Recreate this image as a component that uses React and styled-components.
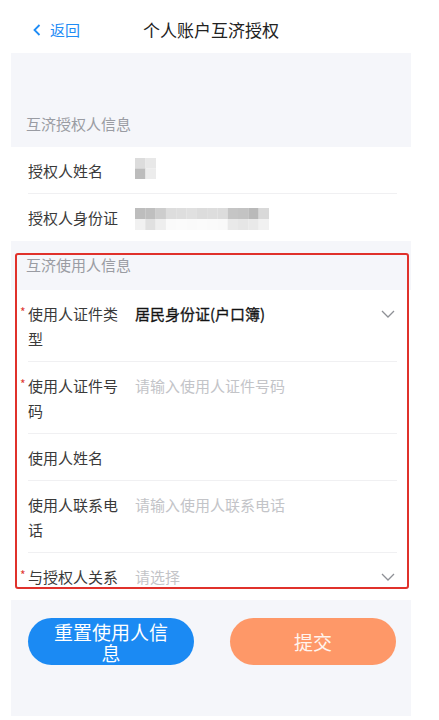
import React from "react";
import styled, { createGlobalStyle } from "styled-components";

const GlobalStyle = createGlobalStyle`
  html, body { margin: 0; padding: 0; background: #ffffff; }
  body {
    font-family: "Noto Sans CJK SC", "Noto Sans", "Liberation Sans", sans-serif;
    -webkit-font-smoothing: antialiased;
  }
  * { box-sizing: border-box; }
`;

const Page = styled.div`
  position: relative;
  width: 400px;
  margin-left: 11px;
  min-height: 720px;
`;

const Header = styled.header`
  height: 53px;
  display: grid;
  grid-template-columns: 1fr auto 1fr;
  align-items: center;
  padding-top: 6px;
`;

const Back = styled.div`
  display: flex;
  align-items: center;
  gap: 9px;
  padding-left: 22px;
  color: #1f8cf5;
  font-size: 15px;
`;

const Title = styled.h1`
  margin: 0;
  font-size: 17px;
  font-weight: 400;
  color: #222;
  letter-spacing: 0;
`;

const Panel = styled.main`
  background: #f5f6fa;
  padding-bottom: 51px;
`;

const SectionHeader = styled.div`
  height: ${(p) => (p.$tall ? "94px" : "49px")};
  display: flex;
  align-items: ${(p) => (p.$tall ? "flex-end" : "center")};
  padding: ${(p) => (p.$tall ? "0 0 12px 15px" : "0 0 2px 15px")};
  font-size: 15px;
  line-height: 22px;
  color: #9a9ca3;
`;

const Card = styled.section`
  background: #ffffff;
`;

const Row = styled.div`
  position: relative;
  display: flex;
  align-items: flex-start;
  margin: 0 14px 0 17px;
  padding: 11px 0 ${(p) => (p.$last ? "11px" : "10px")};
  border-bottom: ${(p) => (p.$last ? "none" : "1px solid #f0f0f2")};
  font-size: 15px;
  line-height: 25px;
`;

const Label = styled.div`
  position: relative;
  flex: 0 0 96px;
  margin-right: 11px;
  color: #3a3a3a;
`;

const Required = styled.span`
  position: absolute;
  left: -8px;
  top: -2px;
  color: #e03a32;
  font-size: 12px;
`;

const Value = styled.div`
  flex: 1;
  color: ${(p) => (p.$placeholder ? "#c3c4c8" : "#141414")};
  font-weight: 400;
  -webkit-text-stroke: ${(p) => (p.$strong ? "0.3px #141414" : "0")};
`;

const Chevron = styled.div`
  flex: 0 0 auto;
  display: flex;
  align-items: center;
  height: 25px;
  margin-right: 2px;
`;

const Mosaic = styled.svg`
  display: block;
  margin-top: ${(p) => p.$top || 0}px;
`;

const Actions = styled.div`
  display: flex;
  justify-content: space-between;
  padding: 18px 15px 0 17px;
`;

const Button = styled.button`
  width: 166px;
  height: 47px;
  border: none;
  border-radius: 24px;
  background: ${(p) => p.$bg};
  color: ${(p) => p.$fg};
  font-family: inherit;
  font-size: 19px;
  line-height: 21px;
  padding: 0 22px;
  cursor: pointer;
`;

const Annotation = styled.div`
  position: absolute;
  left: 4px;
  top: 253px;
  width: 394px;
  height: 336px;
  border: 2px solid #e0312b;
  border-radius: 3px;
  pointer-events: none;
`;

const ChevronDown = () => (
  <Chevron>
    <svg width="14" height="8" viewBox="0 0 14 8">
      <polyline points="1,1 7,7 13,1" fill="none" stroke="#8e9096" strokeWidth="1.3" />
    </svg>
  </Chevron>
);

const nameCells = [
  ["#dcdcdc", "#e8e8e8"],
  ["#bcbcbc", "#ececec"],
];

const idTop = ["#bdbdbd", "#bfbfbf", "#cdcdcd", "#dddddd", "#dedede", "#e0e0e0", "#dcdcdc", "#dddddd", "#dcdcdc", "#c5c5c5", "#c3c3c3", "#b9b9b9", "#d9d9d9"];
const idBottom = ["#f1f1f1", "#e0e0e0", "#eeeeee", "#fafafa", "#fbfbfb", "#fafafa", "#fbfbfb", "#fafafa", "#f9f9f9", "#e9e9e9", "#e6e6e6", "#e9e9e9", "#f1f1f1"];

const NameMosaic = () => (
  <Mosaic width="21" height="21" $top={0}>
    {nameCells.map((r, i) =>
      r.map((c, j) => <rect key={`${i}-${j}`} x={j * 10.5} y={i * 10.5} width="10.5" height="10.5" fill={c} />)
    )}
  </Mosaic>
);

const IdMosaic = () => (
  <Mosaic width="134" height="22" $top={3}>
    {idTop.map((c, i) => (
      <rect key={`t${i}`} x={i * 10.3} y="0" width="10.4" height="11" fill={c} />
    ))}
    {idBottom.map((c, i) => (
      <rect key={`b${i}`} x={i * 10.3} y="11" width="10.4" height="11" fill={c} />
    ))}
  </Mosaic>
);

export default function App() {
  return (
    <>
      <GlobalStyle />
      <Page>
        <Header>
          <Back>
            <svg width="8" height="12" viewBox="0 0 8 12">
              <polyline points="6.5,1 1.5,6 6.5,11" fill="none" stroke="#1f8cf5" strokeWidth="1.8" />
            </svg>
            <span>返回</span>
          </Back>
          <Title>个人账户互济授权</Title>
          <div />
        </Header>

        <Panel>
          <SectionHeader $tall>互济授权人信息</SectionHeader>
          <Card>
            <Row>
              <Label>授权人姓名</Label>
              <Value>
                <NameMosaic />
              </Value>
            </Row>
            <Row $last>
              <Label>授权人身份证</Label>
              <Value>
                <IdMosaic />
              </Value>
            </Row>
          </Card>

          <SectionHeader>互济使用人信息</SectionHeader>
          <Card>
            <Row>
              <Label>
                <Required>*</Required>使用人证件类型
              </Label>
              <Value $strong>居民身份证(户口簿)</Value>
              <ChevronDown />
            </Row>
            <Row>
              <Label>
                <Required>*</Required>使用人证件号码
              </Label>
              <Value $placeholder>请输入使用人证件号码</Value>
            </Row>
            <Row>
              <Label>使用人姓名</Label>
              <Value />
            </Row>
            <Row>
              <Label>使用人联系电话</Label>
              <Value $placeholder>请输入使用人联系电话</Value>
            </Row>
            <Row $last>
              <Label>
                <Required>*</Required>与授权人关系
              </Label>
              <Value $placeholder>请选择</Value>
              <ChevronDown />
            </Row>
          </Card>

          <Actions>
            <Button $bg="#1b8af3" $fg="#ffffff">重置使用人信息</Button>
            <Button $bg="#fe9868" $fg="#fff4ee">提交</Button>
          </Actions>
        </Panel>

        <Annotation />
      </Page>
    </>
  );
}
